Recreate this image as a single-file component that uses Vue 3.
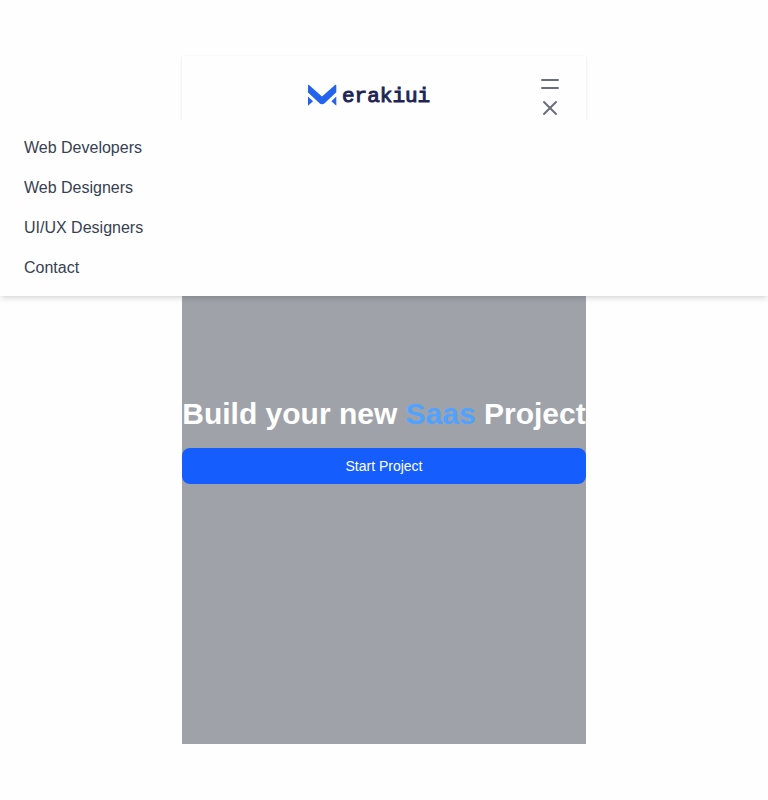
<template>
  <div class="page">
    <header class="header">
      <nav class="nav">
        <div class="nav-bar">
          <a href="#" class="logo" aria-label="merakiui">
            <svg width="128" height="24" viewBox="0 0 128 24">
              <path
                fill="#2463eb"
                d="M0 1.5 Q0 .3 1 1 L14 12.4 L27 1 Q28.3 .3 28.3 1.5 V8.2 L16.6 19.2 Q14 21.2 11.5 19.2 L0 8.4 Z"
              />
              <path fill="#2463eb" d="M0 12.6 L5 17.2 L0 21.8 Z" />
              <path fill="#2463eb" d="M28.3 12.6 L23.4 17.2 L28.3 21.8 Z" />
              <text x="34" y="18" class="logo-text">erakiui</text>
            </svg>
          </a>
          <div class="toggles">
            <button
              type="button"
              class="toggle"
              aria-label="open menu"
              @click="isOpen = true"
            >
              <svg width="24" height="24" viewBox="0 0 24 24">
                <path d="M4 8h16M4 16h16" />
              </svg>
            </button>
            <button
              type="button"
              class="toggle"
              aria-label="close menu"
              @click="isOpen = false"
            >
              <svg width="24" height="24" viewBox="0 0 24 24">
                <path d="M6 18L18 6M6 6l12 12" />
              </svg>
            </button>
          </div>
        </div>
        <div v-if="isOpen" class="menu">
          <a v-for="link in links" :key="link" href="#">{{ link }}</a>
        </div>
      </nav>

      <div class="hero">
        <div class="hero-content">
          <h1>Build your new <span class="blue">Saas</span> Project</h1>
          <button type="button" class="start">Start Project</button>
        </div>
      </div>
    </header>
  </div>
</template>

<script setup>
import { ref } from "vue";

const isOpen = ref(true);
const links = ["Web Developers", "Web Designers", "UI/UX Designers", "Contact"];
</script>

<style>
body {
  margin: 0;
  background-color: #fefefe;
}
</style>

<style scoped>
.page {
  position: relative;
  min-height: 100vh;
  display: flex;
  justify-content: center;
  align-items: center;
  font-family: "Liberation Sans", Arial, sans-serif;
  line-height: 24px;
}
.nav {
  background-color: #fefefe;
  box-shadow: 0 1px 3px rgba(0, 0, 0, 0.1);
}
.nav-bar {
  display: flex;
  align-items: center;
  padding: 16px 24px;
}
.logo {
  flex: 1;
  display: flex;
  justify-content: center;
}
.logo-text {
  font-family: "Liberation Mono", monospace;
  font-size: 21px;
  fill: #1e2555;
  stroke: #1e2555;
  stroke-width: 1;
}
.toggles {
  display: flex;
  flex-direction: column;
}
.toggle {
  display: block;
  padding: 0;
  border: none;
  background: none;
  height: 24px;
  cursor: pointer;
}
.toggle path {
  fill: none;
  stroke: #6b6d78;
  stroke-width: 2;
  stroke-linecap: round;
  stroke-linejoin: round;
}
/* the open menu lies over the hero, across the full page */
.menu {
  position: absolute;
  top: 120px;
  left: 0;
  right: 0;
  z-index: 20;
  display: flex;
  flex-direction: column;
  gap: 16px;
  padding: 16px 24px;
  background-color: #fefefe;
  box-shadow:
    0 4px 6px -1px rgba(0, 0, 0, 0.1),
    0 2px 4px -2px rgba(0, 0, 0, 0.1);
}
.menu a {
  color: #364153;
  text-decoration: none;
}
.hero {
  min-height: 608px;
  display: flex;
  justify-content: center;
  align-items: center;
  background-color: #9fa3a9;
}
.hero-content {
  display: flex;
  flex-direction: column;
  gap: 16px;
}
h1 {
  margin: 0;
  font-size: 30px;
  line-height: 36px;
  font-weight: bold;
  color: white;
}
.blue {
  color: #51a2ff;
}
.start {
  padding: 8px 20px;
  border: none;
  border-radius: 8px;
  background-color: #155dfc;
  color: white;
  font-family: inherit;
  font-size: 14px;
  line-height: 20px;
  cursor: pointer;
}
</style>
